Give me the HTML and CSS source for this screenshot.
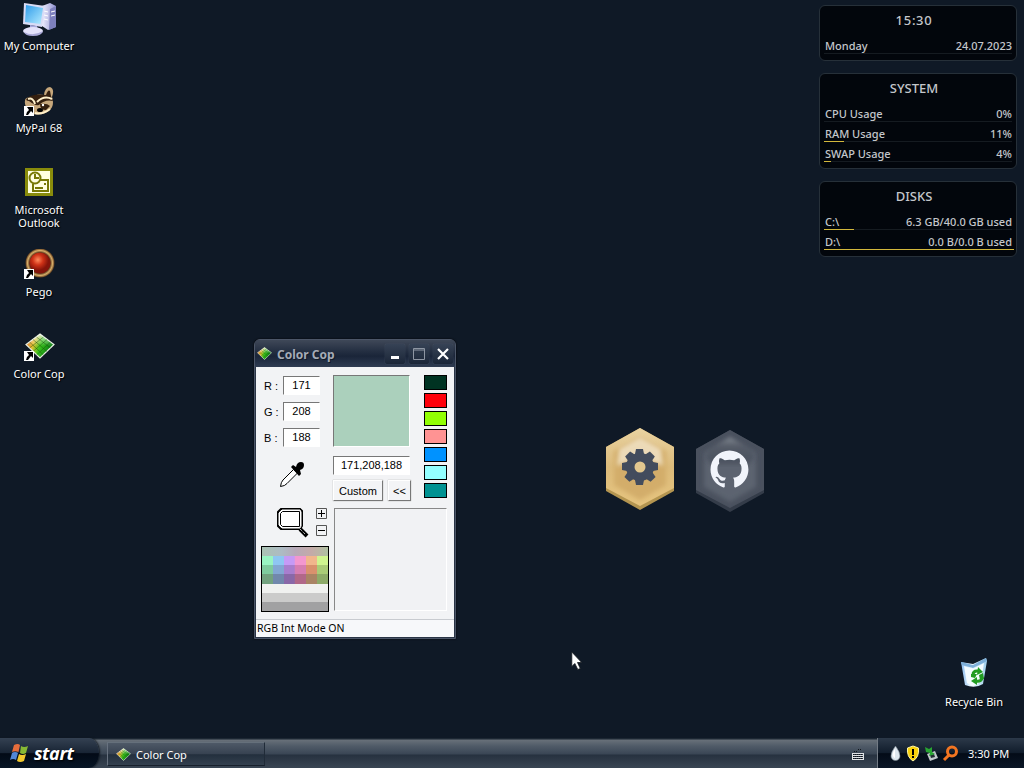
FILE: index.html
```html
<!DOCTYPE html>
<html lang="en">
<head>
<meta charset="utf-8">
<title>Desktop</title>
<link rel="stylesheet" href="styles.css">
</head>
<body>
<svg class="defs" width="0" height="0">
  <defs>
    <linearGradient id="screen" x2="1" y2="1"><stop stop-color="#2e9bea"/><stop offset="1" stop-color="#b4ecff"/></linearGradient>
    <linearGradient id="case" x2="1"><stop stop-color="#eeeeff"/><stop offset="1" stop-color="#8e90cf"/></linearGradient>
    <linearGradient id="warm" x2="0" y2="1"><stop stop-color="#ffffff" stop-opacity=".75"/><stop offset=".5" stop-color="#ffffff" stop-opacity="0"/></linearGradient>
    <linearGradient id="gem" x2="1" y2=".3"><stop stop-color="#d94a10"/><stop offset=".35" stop-color="#e6c030"/><stop offset=".6" stop-color="#39c11b"/><stop offset="1" stop-color="#067a10"/></linearGradient>
    <radialGradient id="redball" cx=".4" cy=".35"><stop stop-color="#ff8a5c"/><stop offset=".5" stop-color="#cf3217"/><stop offset="1" stop-color="#84140a"/></radialGradient>
    <radialGradient id="ring"><stop offset=".68" stop-color="#3b1c0a"/><stop offset=".86" stop-color="#d8ae69"/><stop offset="1" stop-color="#5c3a1b"/></radialGradient>
    <linearGradient id="gold" x2="0" y2="1"><stop stop-color="#e9d3a2"/><stop offset=".5" stop-color="#dcbb7b"/><stop offset="1" stop-color="#e6c47e"/></linearGradient>
    <linearGradient id="steel" x2="0" y2="1"><stop stop-color="#8d939b"/><stop offset=".35" stop-color="#535a66"/><stop offset="1" stop-color="#474e5c"/></linearGradient>
    <linearGradient id="bin" x2="1"><stop stop-color="#8bbdf0"/><stop offset=".4" stop-color="#f0faff"/><stop offset="1" stop-color="#9bcbe9"/></linearGradient>
    <filter id="soft"><feGaussianBlur stdDeviation="2"/></filter>
    <symbol id="arrow" viewBox="0 0 10 10"><path fill="#fff" d="M0 0h10v10H0z"/><path d="M3 1h6v6L7 5 4 9H2q0-3 3-5z"/></symbol>
    <symbol id="cop" viewBox="0 0 30 26">
      <path fill="url(#gem)" stroke="#e7eee0" stroke-width="1.2" d="M15 1 29 11.500 15 25 1 11.500z"/>
      <path fill="url(#warm)" d="M15 1 29 11.500 15 25 1 11.500z"/>
      <path stroke="#194d0b" stroke-opacity=".45" fill="none" d="m4.500 9 14 13M8 6.500l14 12M11.500 4l14 11M18.500 4l-14 11M22 6.500l-14 12M25.500 9l-14 13"/>
    </symbol>
  </defs>
</svg>
<main class="desktop">
  <figure class="shortcut my-computer">
    <svg width="34" height="34" viewBox="0 0 34 34">
      <path fill="url(#case)" d="m20 4 8-3 6 3v21l-8 3-6-4z"/><path fill="#7d80bd" d="m28 7 6-3v21l-7 3z"/>
      <path stroke="#fff" d="m22 9 4 1m-4 3 4 1m-4 3 4 1m3-8 4-1m-4 5 4-1"/>
      <path fill="#d9dcf6" d="M2 1 23 4 20 25 1 22z"/><path fill="url(#screen)" d="m4 3 17 3-2.500 16L3 20z"/>
      <path fill="#a8aade" d="m8 23 7 1 1 5-8-1z"/><ellipse cx="11" cy="29" rx="10" ry="4" fill="#e4e2fa"/><path fill="#aaa9d7" d="M2 30q9 5 19-1-1 5-10 5-8 0-9-4z"/>
    </svg>
    <figcaption>My Computer</figcaption>
  </figure>
  <figure class="shortcut mypal">
    <svg width="34" height="30" viewBox="0 0 34 30">
      <path fill="#c6a77b" d="M22 9q1-8 6-8 5 2 2 10 3 9-3 14-8 6-20 2-5-9-4-12 0-5 7-3 4-5 12-3z"/>
      <path fill="#35200f" d="M24 9q2-6 4-4l1 5 2 5q-8-2-14 4-4 1-10-4-4 0-2-3 6-5 19-3zM18 18q7-1 10 2l-4 4q-6 0-6-6z"/>
      <path stroke="#fff0ca" stroke-width="2" fill="none" d="M6 13q5-2 7 5m2-2q7-7 15-3M13 27q7 2 15-4"/><ellipse cx="18" cy="24" rx="3" ry="2"/><circle cx="21" cy="19" r="1.200" fill="#fff"/>
      <use href="#arrow" x="2" y="20" width="10" height="10"/>
    </svg>
    <figcaption>MyPal 68</figcaption>
  </figure>
  <figure class="shortcut outlook">
    <svg width="28" height="28" viewBox="0 0 28 28"><path fill="#898c0b" d="M0 0h28v28H0z"/><path fill="#ffffe0" d="M3 3h22v22H3z"/><g fill="none" stroke="#777905" stroke-width="2"><path d="M12 12h11v11H8v-7"/><circle cx="10" cy="10" r="5.500" fill="#ffffe0"/><path d="M10 6v4h4M10 20h8m1-4h2"/></g></svg>
    <figcaption>Microsoft<br>Outlook</figcaption>
  </figure>
  <figure class="shortcut pego">
    <svg width="34" height="30" viewBox="0 0 34 30"><circle cx="18" cy="14" r="14.500" fill="url(#ring)"/><circle cx="18" cy="14" r="10.500" fill="url(#redball)"/><use href="#arrow" x="2" y="20" width="10" height="10"/></svg>
    <figcaption>Pego</figcaption>
  </figure>
  <figure class="shortcut cop-link">
    <svg width="34" height="28" viewBox="0 0 34 28"><use href="#cop" x="3" y="0" width="30" height="26"/><use href="#arrow" x="2" y="18" width="10" height="10"/></svg>
    <figcaption>Color Cop</figcaption>
  </figure>
  <figure class="shortcut recycle">
    <svg width="30" height="32" viewBox="0 0 30 32"><path fill="url(#bin)" d="m2 5 12 2L27 1l1 3-4 23q-8 5-18 1z"/><path fill="#7eafd8" d="m2 5 12 3L27 1l1 3-14 7L3 8z"/><path fill="#f4fcff" d="m5 9 9 3 11-6-3 19-8 4-6-3z"/><g fill="none" stroke="#229c22" stroke-width="3"><path d="M14 18q0-4 4-4h3M23 20q0 5-6 4h-2"/></g><path fill="#229c22" d="m19 10 5 5-6 3zM18 20l-6 4 6 4zM12 17h6l-2 4-4-1zM20 18l4-2 1 6-4 1z"/></svg>
    <figcaption>Recycle Bin</figcaption>
  </figure>

  <aside class="widgets">
    <section class="widget clock"><h2>15:30</h2><p><span>Monday</span><span>24.07.2023</span></p></section>
    <section class="widget system"><h2>SYSTEM</h2>
      <p><span>CPU Usage</span><span>0%</span></p>
      <p class="ram"><span>RAM Usage</span><span>11%</span></p>
      <p class="swap"><span>SWAP Usage</span><span>4%</span></p></section>
    <section class="widget disks"><h2>DISKS</h2>
      <p class="disk-c"><span>C:\</span><span>6.3 GB/40.0 GB used</span></p>
      <p class="disk-d"><span>D:\</span><span>0.0 B/0.0 B used</span></p></section>
  </aside>

  <section class="window">
    <header class="titlebar">
      <svg width="15" height="13"><use href="#cop" width="15" height="13"/></svg>
      <h1>Color Cop</h1>
      <div class="controls">
        <svg width="20" height="20"><path fill="#fff" d="M6 12h8v3H6z"/></svg>
        <svg width="20" height="20"><path fill="none" stroke="#8e96a3" d="M4.500 4.500h11v11h-11zM5 6h11"/></svg>
        <svg width="20" height="20"><path stroke="#fff" stroke-width="2.200" d="m5 5 10 10m0-10L5 15"/></svg>
      </div>
    </header>
    <div class="client">
      <div class="tools">
        <div class="channels">
          <span>R :</span><output>171</output>
          <span>G :</span><output>208</output>
          <span>B :</span><output>188</output>
        </div>
        <svg class="dropper" width="26" height="27" viewBox="0 0 26 27"><path fill="#fff" stroke="#000" d="M14.500 8.500 4 19q-2 2-2.500 6.500Q6 25 8 22.500L18.500 12z"/><path d="m12 6 2-2 3 2q1-5 5-5 3 0 3 3 0 4-4 5l1 4-2 2z"/></svg>
        <div class="magnify">
          <svg width="32" height="30" viewBox="0 0 32 30"><path fill="#fff" stroke="#000" stroke-width="2" d="M4 1h19l2 2v15l-2 3H4l-3-3V4z"/><path fill="none" stroke="#fff" d="M5 2h18l1 2v14l-1 2H5l-3-3V5z"/><path fill="none" stroke="#000" d="M5.500 3.500h17v15h-17l-2-2v-11z"/><path stroke="#000" stroke-width="4" d="m23 21 7 7"/><path stroke="#fff" stroke-dasharray="1 1" d="m23 21 5 5"/></svg>
          <div class="zoom-buttons">
            <svg width="11" height="11"><path fill="none" stroke="#555" d="M.5.5h10v10H.5z"/><path stroke="#000" d="M2 5.500h7M5.500 2v7"/></svg>
            <svg width="11" height="11"><path fill="none" stroke="#555" d="M.5.5h10v10H.5z"/><path stroke="#000" d="M2 5.500h7"/></svg>
          </div>
        </div>
        <div class="palette">
          <i class="p1"></i><i class="p2"></i><i class="p3"></i><i class="p4"></i><i class="p5"></i><i class="p6"></i><i class="p7"></i>
        </div>
      </div>
      <div class="preview">
        <div class="preview-top">
          <div class="current">
            <div class="swatch"></div>
            <output class="value">171,208,188</output>
            <div class="buttons"><button class="custom">Custom</button><button class="fold">&lt;&lt;</button></div>
          </div>
          <div class="history"><i class="pine"></i><i class="red"></i><i class="lime"></i><i class="pink"></i><i class="blue"></i><i class="cyan"></i><i class="teal"></i></div>
        </div>
        <div class="zoom-area"></div>
      </div>
    </div>
    <footer class="status">RGB Int Mode ON</footer>
  </section>

  <svg class="hex settings" width="70" height="84" viewBox="0 0 70 84">
    <path fill="#b49550" d="m35 1 34 19v44L35 83 1 64V20z"/><path fill="url(#gold)" d="m35 1 34 19v41L35 79 1 61V20z"/>
    <path fill="#d3ad6b" d="M35 10 61 24v34L35 73 9 58V24z" filter="url(#soft)"/>
    <path fill="#f3e6cc" opacity=".8" d="m35 10 21 12 2 17q-23-12-46 0l2-17z" filter="url(#soft)"/>
    <g fill="#434c5d"><circle cx="35" cy="40" r="14"/><g id="teeth"><path id="tooth" d="M31 22h7l1 5v26l-1 5h-7l-1-5V27z"/><use href="#tooth" transform="rotate(45 35 40)"/><use href="#tooth" transform="rotate(90 35 40)"/><use href="#tooth" transform="rotate(135 35 40)"/></g></g><circle cx="35" cy="40" r="5.500" fill="#e3c88f"/>
  </svg>
  <svg class="hex github" width="70" height="84" viewBox="0 0 70 84">
    <path fill="#343c49" d="m35 1 34 19v44L35 83 1 64V20z"/><path fill="#4a515e" d="m35 1 34 19v41L35 79 1 61V20z"/>
    <path fill="#5c6370" d="M35 10 61 24v34L35 73 9 58V24z" filter="url(#soft)"/>
    <path fill="url(#steel)" opacity=".85" d="m35 8 22 13 3 8-7 6H17l-7-6 3-8z" filter="url(#soft)"/>
    <g transform="translate(15.500 21.500) scale(2.370)"><path fill="#f1f4fb" d="M8 0C3.580 0 0 3.580 0 8c0 3.540 2.290 6.530 5.470 7.590.4.070.55-.17.55-.38v-1.490c-2.010.37-2.530-.49-2.690-.94-.09-.23-.48-.94-.82-1.130-.28-.15-.68-.52-.01-.53.63-.01 1.080.58 1.230.82.72 1.210 1.870.87 2.330.66.07-.52.28-.87.51-1.070-1.780-.2-3.640-.89-3.640-3.950 0-.87.31-1.590.82-2.150-.08-.2-.36-1.020.08-2.120 0 0 .67-.21 2.200.82A7.600 7.600 0 0 1 8 3.860c.68 0 1.360.09 2 .27 1.530-1.040 2.200-.82 2.200-.82.44 1.100.16 1.920.08 2.120.51.56.82 1.270.82 2.150 0 3.070-1.870 3.750-3.650 3.950.29.25.54.73.54 1.480v2.200c0 .21.150.46.550.38A8.010 8.010 0 0 0 16 8c0-4.420-3.580-8-8-8z"/></g>
  </svg>
  <svg class="cursor" width="12" height="20" viewBox="0 0 12 20"><path fill="#fff" stroke="#151a20" stroke-width=".8" d="M.8 1v14.500l3-3 3 6 2.500-1-2.800-6h4.200z"/></svg>
</main>
<footer class="taskbar">
  <div class="start"><svg width="20" height="20" viewBox="0 0 20 20"><path fill="#e66d3c" d="M4 2q4-2 6 0L8.500 9Q5 7.500 2 9z"/><path fill="#87b934" d="M11 3q3 2 7 0l-2 7q-3 2-6 0z"/><path fill="#5287d7" d="M2 10q3-2 6 0l-2 7q-3-2-6 0z"/><path fill="#f1c92e" d="M9 11q3 2 7 0l-2 7q-4 2-7 0z"/></svg><span>start</span></div>
  <div class="task"><svg width="15" height="13"><use href="#cop" width="15" height="13"/></svg><span>Color Cop</span></div>
  <svg class="keyboard" width="14" height="13"><path fill="none" stroke="#e0e2e5" d="M1 5.500h12M1 7.500h12M1 9.500h12M1 11.500h12M1.500 5v7m11-7v7"/><path stroke="#11151b" stroke-dasharray="1 1" d="M2 6.500h10M2 8.500h10M2 10.500h10M3 3.500h4m0-2h4"/></svg>
  <div class="tray">
    <svg width="13" height="17" viewBox="0 0 13 17"><path fill="#dfe8ef" stroke="#73818c" stroke-width=".6" d="M6.500 1Q11 7 11 11a4.500 4.500 0 0 1-9 0q0-4 4.500-10z"/><path fill="#fff" d="M6 4q-3 4-2 7 1 2 2 2z"/></svg>
    <svg width="14" height="17" viewBox="0 0 14 17"><path fill="#f9d20b" stroke="#fff5a2" d="m7 1 5.500 2q1 9-5.500 13Q.5 12 1.500 3z"/><path d="M6 4h2v6H6zm0 7h2v2H6z"/></svg>
    <svg width="14" height="17" viewBox="0 0 14 17"><path fill="#c2c8cc" d="m3 9 8-3 3 7-8 3z"/><path fill="#222d32" d="m6 10 4-1 1 3-4 1z"/><path fill="#28a532" d="m1 2 4 2 3-2v5l3 2-6 2 1-3-4-1z"/></svg>
    <svg width="17" height="17" viewBox="0 0 17 17"><circle cx="10" cy="6.500" r="4.500" fill="none" stroke="#f27521" stroke-width="3"/><path stroke="#f27521" stroke-width="3" d="m7 10-5 5"/></svg>
    <time>3:30 PM</time>
  </div>
</footer>
</body>
</html>
```
FILE: styles.css
```css
* { box-sizing: border-box; }
body { margin: 0; width: 1024px; height: 768px; overflow: hidden; display: flex; flex-direction: column; background: #0f1926; color: #fff; font: 11px/13px "Noto Sans", sans-serif; }
h1, h2, p, figure { margin: 0; }
svg { display: block; flex: none; }
i { display: block; }
.defs { position: absolute; }
.desktop { position: relative; height: 738px; flex: none; }
.shortcut { position: absolute; width: 78px; display: flex; flex-direction: column; align-items: center; text-align: center; left: 0; text-shadow: 1px 1px 1px #000; white-space: nowrap; }
.shortcut figcaption { margin-top: auto; }
.my-computer { top: 2px; height: 50px; }
.mypal { top: 86px; height: 48px; }
.outlook { top: 168px; height: 61px; }
.pego { top: 249px; height: 49px; }
.cop-link { top: 333px; height: 47px; }
.recycle { left: 935px; top: 657px; height: 51px; }

.widgets { position: absolute; left: 819px; top: 5px; width: 198px; display: grid; gap: 12px; color: #c4c7cb; font: 500 11px/15px "Noto Sans", sans-serif; }
.widget { padding: 7px 4px 0; border: 1px solid #263039; border-radius: 6px; background: #02060c; }
.clock { height: 56px; }
.system { height: 96px; }
.disks { height: 76px; }
.widget h2 { height: 18px; margin-bottom: 5px; padding-right: 8px; text-align: center; font: 500 13px/15px "Noto Sans", sans-serif; }
.clock h2 { letter-spacing: .7px; }
.widget p { position: relative; height: 20px; padding: 2px 0 0 1px; display: flex; justify-content: space-between; background: linear-gradient(#151b21, #151b21) 0 17px / 100% 1px no-repeat; }
.ram::after, .swap::after, .disk-c::after, .disk-d::after { content: ""; position: absolute; left: 0; top: 17px; height: 1px; background: #d3b83c; }
.ram::after { width: 20px; }
.swap::after { width: 7px; }
.disk-c::after { width: 30px; }
.disk-d::after { width: 190px; }

.window { position: absolute; left: 254px; top: 339px; width: 202px; height: 300px; padding: 0 2px 2px; border-radius: 6px 6px 0 0; background: #293445; border: 1px solid #4c5668; color: #000; font: 11px/13px "Liberation Sans", sans-serif; box-shadow: 0 0 2px #000; display: flex; flex-direction: column; padding: 0 1px 1px; }
.titlebar { height: 27px; padding: 0 2px; display: flex; align-items: center; background: linear-gradient(#3f4858, #222d40 45%, #1a2539 60%, #2f3c52); margin: 0 -1px; border-radius: 5px 5px 0 0; }
.titlebar h1 { margin-left: 5px; color: #a5abb6; font: bold 12px/15px "Noto Sans", sans-serif; text-shadow: 1px 1px #111a29; padding-top: 2px; }
.controls { margin-left: auto; display: flex; gap: 4px; padding-top: 1px; }
.controls svg { background: linear-gradient(#364255, #1b2638); border-radius: 2px; box-shadow: 0 0 1px #606b7c; }
.client { height: 252px; flex: none; display: flex; background: #f2f3f5; }
.tools { width: 77px; padding: 9px 0 0 5px; display: flex; flex-direction: column; }
.channels { display: grid; grid-template-columns: 22px 37px; grid-auto-rows: 19px; row-gap: 7px; }
.channels span { padding: 4px 0 0 3px; white-space: pre; }
.channels output, .value { border: 1px solid #fff; border-top-color: #777; border-left-color: #777; background: #fff; text-align: center; line-height: 17px; }
.dropper { margin: 14px 0 0 18px; }
.magnify { display: flex; margin: 20px 0 0 16px; gap: 7px; }
.zoom-buttons { display: grid; gap: 6px; align-content: start; }
.palette { margin-top: 8px; width: 68px; height: 66px; border: 1px solid #000; display: grid; grid-template-rows: repeat(7, 1fr); }
.p1 { background: linear-gradient(90deg, #abc3b3, #adbbc4 30%, #b7a9b8 50%, #c4aaa8 75%, #afc1a2); }
.p2, .p3, .p4 { background: linear-gradient(90deg, #99f4c2 0 16%, #8ec6f2 17% 33%, #c59af6 34% 49%, #f397cf 50% 66%, #f1b68c 67% 83%, #cff48f 84%); }
.p3 { background: linear-gradient(90deg, #7fcb9e 0 16%, #83a7d3 17% 33%, #a87ece 34% 49%, #d67eb2 50% 66%, #d9916d 67% 83%, #aacb77 84%); }
.p4 { background: linear-gradient(90deg, #73a27f 0 16%, #7188ac 17% 33%, #8968a8 34% 49%, #b16888 50% 66%, #a98464 67% 83%, #8daa68 84%); }
.p5 { background: #f0f1ef; }
.p6 { background: #cbcbca; }
.p7 { background: #a1a1a2; }
.preview { width: 121px; padding: 8px 7px 0 0; }
.preview-top { display: flex; justify-content: space-between; height: 133px; }
.current { width: 78px; display: flex; flex-direction: column; }
.swatch { width: 77px; height: 72px; background: #abd0bc; border: 1px solid #777; border-right-color: #fff; border-bottom-color: #fff; }
.value { width: 77px; height: 19px; margin-top: 9px; }
.buttons { display: flex; gap: 5px; margin-top: 5px; }
button { height: 21px; padding: 0; color: #000; font: 11px "Liberation Sans", sans-serif; background: #f3f4f6; border: 1px solid #fff; border-right-color: #777; border-bottom-color: #777; box-shadow: 0 0 1px #999; }
.custom { width: 50px; }
.fold { width: 23px; }
.history { display: grid; grid-auto-rows: 15px; gap: 3px; align-content: start; width: 23px; }
.history i { border: 1px solid #000; }
.pine { background: #003322; } .red { background: #ff000b; } .lime { background: #92ff03; } .pink { background: #ff9393; } .blue { background: #0092ff; } .cyan { background: #93ffff; } .teal { background: #009292; }
.zoom-area { margin-left: 1px; height: 103px; border: 1px solid #888; border-right-color: #fff; border-bottom-color: #fff; background: #f1f2f4; }
.status { flex: 1; border-top: 1px solid #c8cbd0; background: #f7f8fa; font: 10.500px/17px "Noto Sans", sans-serif; padding-left: 1px; }
.hex { position: absolute; top: 427px; }
.settings { left: 605px; }
.github { left: 695px; top: 429px; }
.cursor { position: absolute; left: 571px; top: 651px; }

.taskbar { height: 30px; display: flex; align-items: stretch; background: linear-gradient(#1c2733 0 1px, #687079 2px, #505b68 8px, #3a4655 16px, #26313f 17px, #384452 29px); }
.start { width: 99px; display: flex; align-items: center; gap: 4px; padding-left: 10px; border-radius: 0 10px 10px 0 / 0 15px 15px 0; background: linear-gradient(#344152, #182434 50%, #020a16 52%, #071525); box-shadow: 1px 0 2px #101820; }
.start span { font: italic bold 18px/22px "Open Sans", sans-serif; letter-spacing: -.4px; text-shadow: 1px 1px 2px #000; }
.task { width: 158px; margin: 4px 0 2px 8px; padding-left: 8px; display: flex; gap: 5px; align-items: center; border: 1px solid #596370; border-color: #65707b #202b38 #17202c #687280; background: linear-gradient(#4e5967, #374251 50%, #232f3d 53%, #33404f); }
.keyboard { margin: 10px 12px 0 auto; }
.tray { width: 147px; border-left: 1px solid #737b85; padding-left: 11px; display: flex; align-items: center; gap: 4px; background: linear-gradient(#2c3949, #101c2b 50%, #030b17 52%, #0a1626); }
.tray time { margin-left: 5px; white-space: nowrap; }
```
